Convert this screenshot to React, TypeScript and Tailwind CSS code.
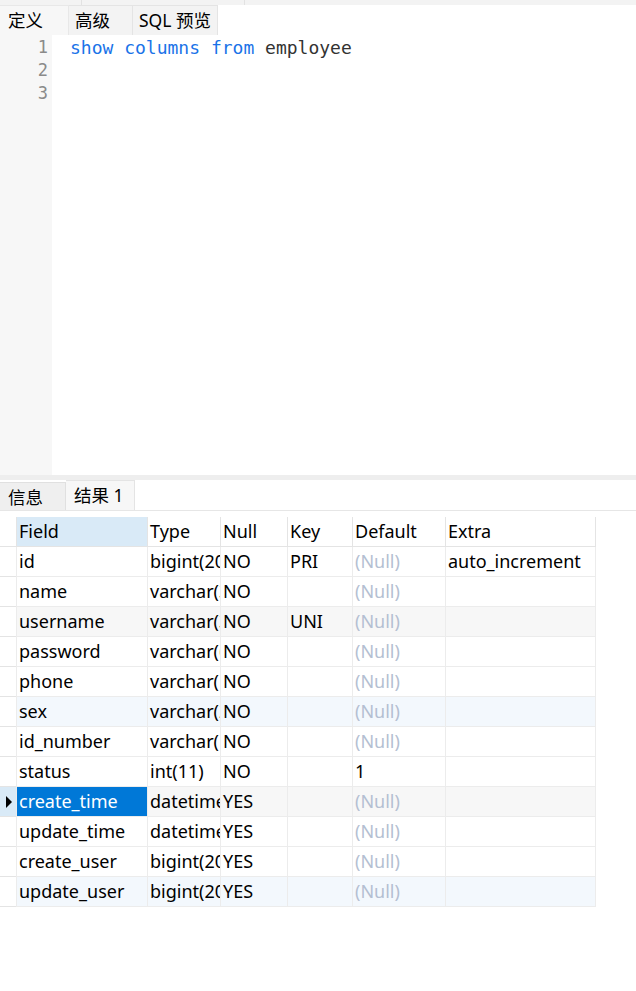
const rows = [
  ["id", "bigint(20)", "NO", "PRI", "", "auto_increment"],
  ["name", "varchar(32)", "NO", "", "", ""],
  ["username", "varchar(32)", "NO", "UNI", "", ""],
  ["password", "varchar(64)", "NO", "", "", ""],
  ["phone", "varchar(11)", "NO", "", "", ""],
  ["sex", "varchar(2)", "NO", "", "", ""],
  ["id_number", "varchar(18)", "NO", "", "", ""],
  ["status", "int(11)", "NO", "", "1", ""],
  ["create_time", "datetime", "YES", "", "", ""],
  ["update_time", "datetime", "YES", "", "", ""],
  ["create_user", "bigint(20)", "YES", "", "", ""],
  ["update_user", "bigint(20)", "YES", "", "", ""],
];

const font = { fontFamily: '"Noto Sans", "Noto Sans CJK SC", sans-serif' };

const rowBg = (i: number) => {
  if (i === 2 || i === 8) return "bg-[#f7f7f7]";
  if (i === 5 || i === 11) return "bg-[#f3f8fd]";
  return "bg-white";
};

const App = () => {
  return (
    <div className="w-[636px] h-[991px] bg-white overflow-hidden text-black" style={font}>
      {/* top strip */}
      <div className="h-[5px] bg-[#f3f3f3] flex">
        <div className="w-[82px] border-r border-[#e2e2e2]" />
        <div className="w-[163px] border-r border-[#e2e2e2]" />
      </div>
      {/* editor tabs */}
      <div className="h-[30px] flex bg-[#f3f3f3] text-[17.5px]">
        <div className="w-[69px] bg-[#f7f7f7] border-t border-r border-[#e8e8e8] pl-2 leading-[28px]">定义</div>
        <div className="w-[64px] bg-[#f3f3f3] border-t border-r border-[#e4e4e4] pl-1.5 leading-[28px]">高级</div>
        <div className="w-[85px] bg-[#f3f3f3] border-t border-r border-[#e4e4e4] pl-1.5 leading-[28px]">SQL 预览</div>
        <div className="flex-1 bg-white" />
      </div>
      {/* editor */}
      <div className="h-[440px] flex" style={{ fontFamily: '"DejaVu Sans Mono", monospace' }}>
        <div className="w-[52px] bg-[#f7f7f7] text-right pr-[4px] pt-[1px] text-[#8a8a8a] text-[17px] leading-[23px]">
          <div>1</div>
          <div>2</div>
          <div>3</div>
        </div>
        <div className="flex-1 pl-[18px] pt-[1px] text-[18px] leading-[23px]">
          <span className="text-[#1a73e8]">show columns from</span>{" "}
          <span className="text-[#333]">employee</span>
        </div>
      </div>
      {/* splitter */}
      <div className="h-[5px] bg-[#eeeeee]" />
      {/* result tabs */}
      <div className="h-[31px] flex text-[17.5px] border-b border-[#e6e6e6]">
        <div className="w-[66px] mt-[2px] bg-[#efefef] border-t border-r border-[#e0e0e0] pl-2 leading-[28px]">信息</div>
        <div className="w-[69px] bg-[#f7f7f7] border-t border-r border-[#e4e4e4] pl-2 leading-[28px]">结果 1</div>
      </div>
      {/* grid */}
      <div className="mt-[6px] grid grid-cols-[16px_131px_73px_67px_65px_93px_151px] w-[596px] text-[18px]">
        <div className="h-[30px] border-b border-[#e4e4e4]" />
        {["Field", "Type", "Null", "Key", "Default", "Extra"].map((h, i) => (
          <div
            key={h}
            className={`h-[30px] pl-[2px] leading-[29px] border-l border-b border-[#e4e4e4] ${i === 0 ? "bg-[#d9eaf7]" : "bg-white"} ${i === 5 ? "border-r" : ""}`}
          >
            {h}
          </div>
        ))}
        {rows.map((r, i) => {
          const sel = i === 8;
          return [
            <div
              key={`ind${i}`}
              className={`h-[30px] border-b border-[#e4e4e4] flex items-center pl-[6px] ${sel ? "bg-[#d9eaf7]" : "bg-white"}`}
            >
              {sel && (
                <svg width="6" height="12" viewBox="0 0 6 12">
                  <path d="M0 0 L6 6 L0 12 Z" fill="#000" />
                </svg>
              )}
            </div>,
            ...r.map((c, j) => {
              const isNull = j === 4 && c === "";
              const selCell = sel && j === 0;
              return (
                <div
                  key={`c${i}-${j}`}
                  className={`h-[30px] pl-[2px] leading-[29px] border-l border-b border-[#ececec] whitespace-nowrap overflow-hidden ${
                    selCell ? "bg-[#0078d7] text-white" : rowBg(i)
                  } ${isNull ? "text-[#b4bfd2]" : ""} ${j === 5 ? "border-r" : ""}`}
                >
                  {isNull ? "(Null)" : c}
                </div>
              );
            }),
          ];
        })}
      </div>
    </div>
  );
};

export default App;
